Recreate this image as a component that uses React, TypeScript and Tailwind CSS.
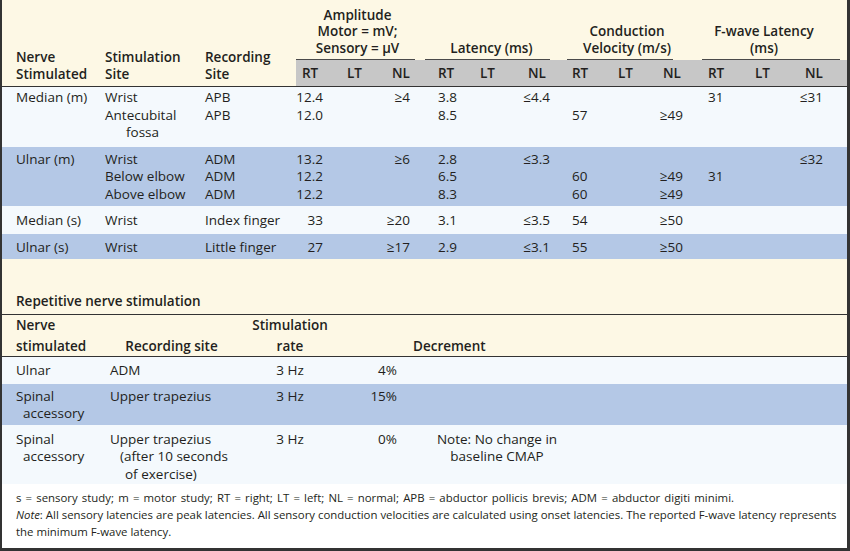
import React from "react";

type Line = string | { t: string; cls: string };
type Row = { bg: string; pad: string; cells: Line[][] };

// 15 columns of the nerve conduction table
const GRID1 =
  "grid grid-cols-[103px_100px_91px_51px_38px_40px_55px_40px_47px_51px_37px_47px_53px_40px_52px]";
const GRID2 = "grid grid-cols-[108px_123px_114px_58px_184px_1fr]";

const colCls1 = [
  "pl-[14px]",
  "",
  "",
  "text-right pr-[24px]",
  "",
  "text-right pr-[15px]",
  "pl-[13px]",
  "",
  "text-right pr-[17px]",
  "pl-[5px]",
  "",
  "text-right pr-[19px]",
  "pl-[6px]",
  "",
  "text-right pr-[24px]",
];

const colCls2 = ["pl-[14px]", "", "text-center", "text-right pr-[8px]", "text-center", ""];

const LIGHT = "bg-[#f4f9fd]";
const BLUE = "bg-[#b4c8e6]";

const rows1: Row[] = [
  {
    bg: LIGHT,
    pad: "pt-[2px] pb-[5px]",
    cells: [
      ["Median (m)"],
      ["Wrist", "Antecubital", { t: "fossa", cls: "pl-[21px]" }],
      ["APB", "APB"],
      ["12.4", "12.0"],
      [],
      ["≥4"],
      ["3.8", "8.5"],
      [],
      ["≤4.4"],
      ["", "57"],
      [],
      ["", "≥49"],
      ["31"],
      [],
      ["≤31"],
    ],
  },
  {
    bg: BLUE,
    pad: "pt-[4px] pb-[3px]",
    cells: [
      ["Ulnar (m)"],
      ["Wrist", "Below elbow", "Above elbow"],
      ["ADM", "ADM", "ADM"],
      ["13.2", "12.2", "12.2"],
      [],
      ["≥6"],
      ["2.8", "6.5", "8.3"],
      [],
      ["≤3.3"],
      ["", "60", "60"],
      [],
      ["", "≥49", "≥49"],
      ["", "31"],
      [],
      ["≤32"],
    ],
  },
  {
    bg: LIGHT,
    pad: "pt-[6px] pb-[4px]",
    cells: [
      ["Median (s)"],
      ["Wrist"],
      ["Index finger"],
      ["33"],
      [],
      ["≥20"],
      ["3.1"],
      [],
      ["≤3.5"],
      ["54"],
      [],
      ["≥50"],
      [],
      [],
      [],
    ],
  },
  {
    bg: BLUE,
    pad: "pt-[5px] pb-[3px]",
    cells: [
      ["Ulnar (s)"],
      ["Wrist"],
      ["Little finger"],
      ["27"],
      [],
      ["≥17"],
      ["2.9"],
      [],
      ["≤3.1"],
      ["55"],
      [],
      ["≥50"],
      [],
      [],
      [],
    ],
  },
];

const rows2: Row[] = [
  {
    bg: LIGHT,
    pad: "pt-[5px] pb-[4px]",
    cells: [["Ulnar"], ["ADM"], ["3 Hz"], ["4%"], [], []],
  },
  {
    bg: BLUE,
    pad: "pt-[4px] pb-[2px]",
    cells: [
      ["Spinal", { t: "accessory", cls: "pl-[7px]" }],
      ["Upper trapezius"],
      ["3 Hz"],
      ["15%"],
      [],
      [],
    ],
  },
  {
    bg: LIGHT,
    pad: "pt-[6px] pb-[1px]",
    cells: [
      ["Spinal", { t: "accessory", cls: "pl-[7px]" }],
      [
        "Upper trapezius",
        { t: "(after 10 seconds", cls: "pl-[10px]" },
        { t: "of exercise)", cls: "pl-[15px]" },
      ],
      ["3 Hz"],
      ["0%"],
      ["Note: No change in", "baseline CMAP"],
      [],
    ],
  },
];

function Cell({ lines, cls }: { lines: Line[]; cls: string }) {
  return (
    <div className={cls}>
      {lines.map((l, i) =>
        typeof l === "string" ? (
          <div key={i} className="whitespace-nowrap">
            {l === "" ? "\u00a0" : l}
          </div>
        ) : (
          <div key={i} className={`whitespace-nowrap ${l.cls}`}>
            {l.t}
          </div>
        )
      )}
    </div>
  );
}

function DataRow({ row, grid, colCls }: { row: Row; grid: string; colCls: string[] }) {
  return (
    <div className={`${grid} ${row.bg} ${row.pad} leading-[17.5px]`}>
      {row.cells.map((c, i) => (
        <Cell key={i} lines={c} cls={colCls[i]} />
      ))}
    </div>
  );
}

function Group({ lines, cls }: { lines: string[]; cls: string }) {
  return (
    <div
      className={`col-span-3 flex flex-col justify-end items-center text-center pb-[3px] leading-[16.5px] border-b border-[#4a4a4a] ${cls}`}
    >
      {lines.map((l) => (
        <div key={l} className="whitespace-nowrap">
          {l}
        </div>
      ))}
    </div>
  );
}

function Sub({ label, cls }: { label: string; cls: string }) {
  return <div className={`bg-[#c7c7c7] flex items-center ${cls}`}>{label}</div>;
}

export default function App() {
  return (
    <div className="w-[850px] h-[551px] overflow-hidden bg-[#fdf8e5] border-l-2 border-r-[3px] border-b-[3px] border-[#333] text-[#231f20] text-[13.5px] font-['Open_Sans','Noto_Sans',sans-serif]">
      {/* Nerve conduction header */}
      <div className={`${GRID1} grid-rows-[60px_26px] border-b border-[#333] font-semibold`}>
        <div className="row-span-2 self-end pl-[14px] pb-[4px] leading-[16.5px]">
          <div>Nerve</div>
          <div>Stimulated</div>
        </div>
        <div className="row-span-2 self-end pb-[4px] leading-[16.5px]">
          <div>Stimulation</div>
          <div>Site</div>
        </div>
        <div className="row-span-2 self-end pb-[4px] leading-[16.5px]">
          <div>Recording</div>
          <div>Site</div>
        </div>
        <Group lines={["Amplitude", "Motor = mV;", "Sensory = µV"]} cls="mr-[10px] pl-[4px]" />
        <Group lines={["Latency (ms)"]} cls="mr-[17px] pl-[8px]" />
        <Group lines={["Conduction", "Velocity (m/s)"]} cls="mr-[29px] pl-[14px]" />
        <Group lines={["F-wave Latency", "(ms)"]} cls="mr-[7px] pr-[14px]" />

        <Sub label="RT" cls="pl-[6px]" />
        <Sub label="LT" cls="" />
        <Sub label="NL" cls="pl-[7px]" />
        <Sub label="RT" cls="pl-[13px]" />
        <Sub label="LT" cls="" />
        <Sub label="NL" cls="pl-[8px]" />
        <Sub label="RT" cls="pl-[5px]" />
        <Sub label="LT" cls="" />
        <Sub label="NL" cls="pl-[8px]" />
        <Sub label="RT" cls="pl-[6px]" />
        <Sub label="LT" cls="" />
        <Sub label="NL" cls="pl-[10px]" />
      </div>

      {rows1.map((r, i) => (
        <DataRow key={i} row={r} grid={GRID1} colCls={colCls1} />
      ))}

      {/* Repetitive nerve stimulation */}
      <div className="h-[56px] flex items-end pl-[14px] pb-[3px] font-semibold border-b border-[#333]">
        Repetitive nerve stimulation
      </div>
      <div className={`${GRID2} h-[42px] items-end pb-[1px] leading-[21px] font-semibold border-b border-[#333]`}>
        <div className="pl-[14px]">
          <div>Nerve</div>
          <div>stimulated</div>
        </div>
        <div className="text-center">Recording site</div>
        <div className="text-center">
          <div>Stimulation</div>
          <div>rate</div>
        </div>
        <div />
        <div className="pl-[8px]">Decrement</div>
        <div />
      </div>

      {rows2.map((r, i) => (
        <DataRow key={i} row={r} grid={GRID2} colCls={colCls2} />
      ))}

      {/* Footnotes */}
      <div className="bg-white h-[70px] pl-[14px] pt-[5px] text-[11.4px] leading-[17px] whitespace-nowrap">
        <div className="[word-spacing:1.2px]">
          s = sensory study; m = motor study; RT = right; LT = left; NL = normal; APB = abductor
          pollicis brevis; ADM = abductor digiti minimi.
        </div>
        <div>
          <i>Note</i>: All sensory latencies are peak latencies. All sensory conduction velocities
          are calculated using onset latencies. The reported F-wave latency represents
        </div>
        <div>the minimum F-wave latency.</div>
      </div>
    </div>
  );
}
